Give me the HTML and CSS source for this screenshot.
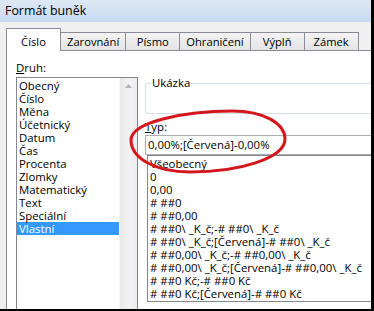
FILE: index.html
```html
<!DOCTYPE html>
<html lang="cs">
<head>
<meta charset="utf-8">
<title>Formát buněk</title>
<link rel="stylesheet" href="styles.css">
</head>
<body>
<div class="dialog">
  <div class="titlebar">Formát buněk</div>
  <div class="body">
    <div class="tabs">
      <div class="tab active">Číslo</div>
      <div class="tab">Zarovnání</div>
      <div class="tab">Písmo</div>
      <div class="tab">Ohraničení</div>
      <div class="tab">Výplň</div>
      <div class="tab">Zámek</div>
    </div>
    <div class="panel">
      <div class="label"><u>D</u>ruh:</div>
      <div class="cols">
        <div class="catlist">
          <ul class="items">
            <li>Obecný</li>
            <li>Číslo</li>
            <li>Měna</li>
            <li>Účetnický</li>
            <li>Datum</li>
            <li>Čas</li>
            <li>Procenta</li>
            <li>Zlomky</li>
            <li>Matematický</li>
            <li>Text</li>
            <li>Speciální</li>
            <li class="selected">Vlastní</li>
          </ul>
          <div class="scrollbar">
            <svg class="arrow" width="7" height="4" viewBox="0 0 7 4"><path d="M0 4 L3.5 0 L7 4 Z" fill="#b4b4b4"/></svg>
          </div>
        </div>
        <div class="right">
          <fieldset class="sample"><legend>Ukázka</legend></fieldset>
          <div class="label typ"><u>T</u>yp:</div>
          <div class="typeinput">0,00%;[Červená]-0,00%</div>
          <ul class="typelist">
            <li>Všeobecný</li>
            <li>0</li>
            <li>0,00</li>
            <li># ##0</li>
            <li># ##0,00</li>
            <li># ##0\ _K_č;-# ##0\ _K_č</li>
            <li># ##0\ _K_č;[Červená]-# ##0\ _K_č</li>
            <li># ##0,00\ _K_č;-# ##0,00\ _K_č</li>
            <li># ##0,00\ _K_č;[Červená]-# ##0,00\ _K_č</li>
            <li># ##0 Kč;-# ##0 Kč</li>
            <li># ##0 Kč;[Červená]-# ##0 Kč</li>
          </ul>
        </div>
      </div>
    </div>
  </div>
  <svg class="annotation" width="374" height="311" viewBox="0 0 374 311">
    <path d="M131 140 C131 122 185 111 232 111 C265 111 285 124 285 139 C285 158 240 172 190 172 C155 172 131 158 131 140 Z" fill="none" stroke="#d3171d" stroke-width="3"/>
  </svg>
</div>
</body>
</html>
```

FILE: styles.css
```css
* { box-sizing: border-box; }
html, body { margin: 0; padding: 0; }
body {
  font-family: "Open Sans", "Noto Sans", sans-serif;
  font-size: 11.4px;
  color: #000;
  background: #fff;
}
.dialog {
  position: relative;
  width: 374px;
  height: 311px;
  overflow: hidden;
  background: #f0f0f0;
  border-right: 3px solid #000;
  border-bottom: 2px solid #000;
}
.titlebar {
  height: 22px;
  line-height: 22px;
  padding-left: 5px;
  font-size: 12.4px;
  background: linear-gradient(#dfe9f6, #c7d9f0);
}
.body {
  padding: 6px 0 0 6px;
}
.tabs {
  display: flex;
  align-items: flex-end;
  height: 22px;
  position: relative;
  z-index: 1;
  font-size: 11.2px;
}
.tab {
  min-width: 55px;
  height: 18px;
  padding: 0 6px;
  margin-left: -1px;
  text-align: center;
  line-height: 17px;
  border: 1px solid #898c95;
  border-bottom: none;
  background: linear-gradient(#f4f4f4, #e4e4e4);
  white-space: nowrap;
}
.tab:first-child { margin-left: 0; }
.tab.active {
  height: 23px;
  margin-bottom: -1px;
  line-height: 26px;
  background: #fff;
  position: relative;
  z-index: 2;
}
.panel {
  background: #fff;
  border-top: 1px solid #898c95;
  border-left: 1px solid #898c95;
  height: 300px;
  padding: 10px 0 0 9px;
}
.label {
  height: 14px;
  line-height: 14px;
  margin-bottom: 2px;
}
.cols {
  display: grid;
  grid-template-columns: 122px 300px;
  column-gap: 7px;
  align-items: start;
}
ul { list-style: none; margin: 0; }
.catlist {
  display: flex;
  height: 260px;
  border: 1px solid #828790;
}
.items {
  flex: 1;
  padding: 1px 0 0 0;
}
.items li, .typelist li {
  height: 13px;
  line-height: 13px;
  padding-left: 2px;
  white-space: nowrap;
}
.items li.selected {
  background: #3399ff;
  color: #fff;
}
.scrollbar {
  width: 18px;
  background: linear-gradient(90deg, #e9e9e9, #f3f3f3 60%, #ececec);
  border-left: 1px solid #f7f7f7;
  display: flex;
  justify-content: center;
  padding-top: 6px;
}
.arrow { display: block; }
.sample {
  margin: 0;
  height: 37px;
  padding: 0 0 0 5px;
  border: 1px solid #d5dfe5;
  border-radius: 3px;
  min-inline-size: 0;
}
.sample legend {
  padding: 0 1px;
  line-height: 12px;
  height: 12px;
}
.label.typ {
  margin-top: 6px;
  margin-bottom: 1px;
}
.typeinput {
  height: 20px;
  line-height: 18px;
  padding-left: 2px;
  border: 1px solid #abadb3;
  white-space: nowrap;
}
.typelist {
  margin-left: 2px;
  height: 147px;
  padding: 1px 0 0 0;
  border: 1px solid #828790;
}
.annotation {
  position: absolute;
  left: 0;
  top: 0;
  pointer-events: none;
}
```
